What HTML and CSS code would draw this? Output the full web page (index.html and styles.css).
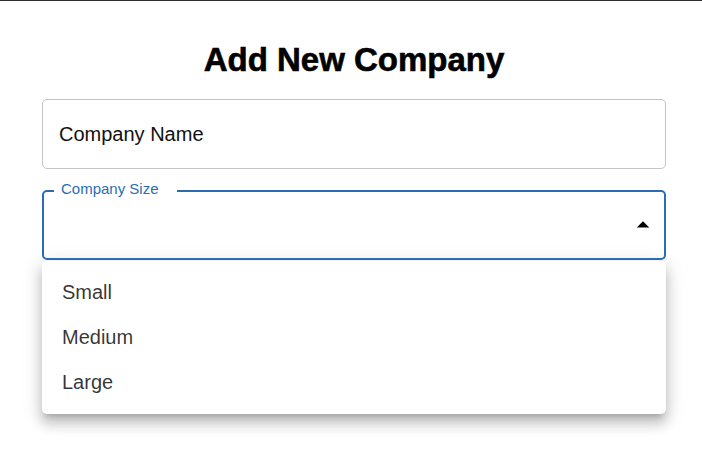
FILE: index.html
```html
<!DOCTYPE html>
<html lang="en">
<head>
<meta charset="utf-8">
<title>Add New Company</title>
<link rel="stylesheet" href="styles.css">
</head>
<body>
<main class="form">
  <h1 class="title">Add New Company</h1>
  <div class="field field-name">
    <span class="field-text">Company Name</span>
  </div>
  <div class="field field-select">
    <span class="field-label">Company Size</span>
    <svg class="arrow" viewBox="0 0 24 24" width="30" height="30" aria-hidden="true"><path d="M7 14l5-5 5 5z"/></svg>
  </div>
  <ul class="menu">
    <li class="menu-item">Small</li>
    <li class="menu-item">Medium</li>
    <li class="menu-item">Large</li>
  </ul>
</main>
</body>
</html>
```

FILE: styles.css
```css
html, body {
  margin: 0;
  padding: 0;
  background: #ffffff;
}

html {
  min-height: 100%;
}

body {
  min-height: 466px;
  box-sizing: border-box;
  border-top: 1px solid #2b2b2b;
  font-family: "Liberation Sans", Arial, sans-serif;
  color: rgba(0, 0, 0, 0.87);
}

.form {
  width: 624px;
  margin-left: 42px;
  padding-top: 42px;
  padding-bottom: 52px;
  display: flex;
  flex-direction: column;
}

.title {
  margin: 0 0 23px;
  font-size: 33px;
  line-height: 33px;
  font-weight: 700;
  text-align: center;
  color: #000;
  -webkit-text-stroke: 0.6px #000;
}

.field {
  box-sizing: border-box;
  height: 70px;
  border-radius: 5px;
  display: flex;
  align-items: center;
}

.field-name {
  border: 1px solid #c4c4c4;
  padding-left: 16px;
}

.field-text {
  font-size: 20px;
  color: #111;
}

.field-select {
  margin-top: 21px;
  border: 2px solid #2a6db2;
  position: relative;
  justify-content: flex-end;
  padding-right: 6px;
}

.field-label {
  position: absolute;
  left: 10px;
  top: -11px;
  padding: 0 18px 0 7px;
  background: #ffffff;
  font-size: 15px;
  line-height: 15px;
  color: #2a6db2;
}

.arrow {
  fill: #000;
  display: block;
}

.menu {
  margin: 1px 0 0;
  padding: 9px 0;
  list-style: none;
  background: #ffffff;
  border-radius: 5px;
  box-shadow: 0 6px 6px -4px rgba(0, 0, 0, 0.2),
              0 10px 12px 1px rgba(0, 0, 0, 0.14),
              0 4px 18px 3px rgba(0, 0, 0, 0.12);
}

.menu-item {
  height: 45px;
  display: flex;
  align-items: center;
  padding-left: 20px;
  font-size: 20px;
  color: rgba(0, 0, 0, 0.8);
}
```
